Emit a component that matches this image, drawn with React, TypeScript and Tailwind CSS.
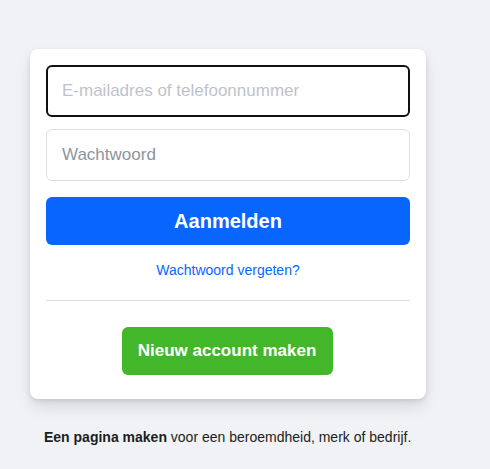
import { useState } from 'react';

export default function App() {
  const [email, setEmail] = useState('');
  const [password, setPassword] = useState('');

  return (
    <div className="min-h-[469px] bg-[#f0f2f5] pl-[30px] pt-[49px] font-['Liberation_Sans',Arial,sans-serif]">
      <div className="w-[396px]">
        <form
          onSubmit={e => e.preventDefault()}
          className="bg-white rounded-lg shadow-[0_2px_4px_rgba(0,0,0,0.1),0_8px_16px_rgba(0,0,0,0.1)] px-4 pt-4 pb-6 flex flex-col"
        >
          <input
            type="text"
            value={email}
            onChange={e => setEmail(e.target.value)}
            placeholder="E-mailadres of telefoonnummer"
            className="h-[52px] w-full rounded-md border-2 border-[#111] px-[14px] text-[17px] text-[#1c1e21] placeholder:text-[#bec3c9] outline-none"
          />
          <input
            type="password"
            value={password}
            onChange={e => setPassword(e.target.value)}
            placeholder="Wachtwoord"
            className="mt-3 h-[52px] w-full rounded-md border border-[#dddfe2] px-[15px] text-[17px] text-[#1c1e21] placeholder:text-[#8d949e] outline-none"
          />
          <button type="submit" className="mt-4 h-12 w-full rounded-md bg-[#0866ff] text-white text-[20px] font-bold">
            Aanmelden
          </button>
          <a href="#" className="mt-4 text-center text-sm text-[#0866ff] leading-[19px]">
            Wachtwoord vergeten?
          </a>
          <div className="mt-5 border-b border-[#dadde1]" />
          <div className="mt-[26px] flex justify-center">
            <button type="button" className="h-12 w-[211px] rounded-md bg-[#42b72a] text-white text-[17px] font-bold -translate-x-px">
              Nieuw account maken
            </button>
          </div>
        </form>
        <p className="mt-7 ml-[14px] text-sm text-[#1c1e21]">
          <span className="font-bold">Een pagina maken</span> voor een beroemdheid, merk of bedrijf.
        </p>
      </div>
    </div>
  );
}
